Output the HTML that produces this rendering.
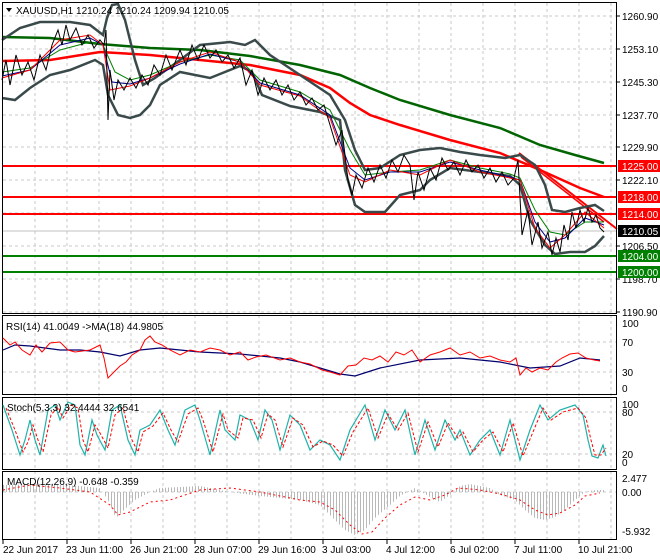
<!DOCTYPE html>
<html><head><meta charset="utf-8"><style>
html,body{margin:0;padding:0;background:#fff;width:660px;height:560px;overflow:hidden}
svg{display:block;font-family:"Liberation Sans",sans-serif;font-size:10px}
</style></head><body>
<svg width="660" height="560" viewBox="0 0 660 560" xmlns="http://www.w3.org/2000/svg">
<defs>
<pattern id="hb" width="3" height="10" patternUnits="userSpaceOnUse"><rect x="0" y="0" width="1" height="10" fill="#b8b8b8"/></pattern>
</defs>
<g stroke="#c8c8c8" stroke-dasharray="3,3" stroke-width="1">
<line x1="35" y1="3" x2="35" y2="540"/><line x1="67" y1="3" x2="67" y2="540"/><line x1="99" y1="3" x2="99" y2="540"/><line x1="131" y1="3" x2="131" y2="540"/><line x1="163" y1="3" x2="163" y2="540"/><line x1="195" y1="3" x2="195" y2="540"/><line x1="227" y1="3" x2="227" y2="540"/><line x1="259" y1="3" x2="259" y2="540"/><line x1="291" y1="3" x2="291" y2="540"/><line x1="323" y1="3" x2="323" y2="540"/><line x1="355" y1="3" x2="355" y2="540"/><line x1="387" y1="3" x2="387" y2="540"/><line x1="419" y1="3" x2="419" y2="540"/><line x1="451" y1="3" x2="451" y2="540"/><line x1="483" y1="3" x2="483" y2="540"/><line x1="515" y1="3" x2="515" y2="540"/><line x1="547" y1="3" x2="547" y2="540"/><line x1="579" y1="3" x2="579" y2="540"/><line x1="611" y1="3" x2="611" y2="540"/>
<line x1="3" y1="16" x2="617" y2="16"/><line x1="3" y1="49" x2="617" y2="49"/><line x1="3" y1="82" x2="617" y2="82"/><line x1="3" y1="115" x2="617" y2="115"/><line x1="3" y1="147" x2="617" y2="147"/><line x1="3" y1="180" x2="617" y2="180"/><line x1="3" y1="213" x2="617" y2="213"/><line x1="3" y1="246" x2="617" y2="246"/><line x1="3" y1="279" x2="617" y2="279"/><line x1="3" y1="312" x2="617" y2="312"/>
<line x1="3" y1="342" x2="617" y2="342"/><line x1="3" y1="372" x2="617" y2="372"/>
<line x1="3" y1="412" x2="617" y2="412"/><line x1="3" y1="454" x2="617" y2="454"/>
<line x1="3" y1="492" x2="617" y2="492"/>
</g>
<!-- horizontal levels -->
<g stroke-width="2">
<line x1="3" y1="166" x2="617" y2="166" stroke="#f00"/>
<line x1="3" y1="197" x2="617" y2="197" stroke="#f00"/>
<line x1="3" y1="214" x2="617" y2="214" stroke="#f00"/>
<line x1="3" y1="256" x2="617" y2="256" stroke="#008000"/>
<line x1="3" y1="272" x2="617" y2="272" stroke="#008000"/>
</g>
<line x1="3" y1="231" x2="617" y2="231" stroke="#c0c0c0"/>
<!-- MAs -->
<polyline fill="none" stroke="#006400" stroke-width="2.5" points="2,37 50,38 100,44 150,48 200,50 250,56 300,65 340,75 370,88 400,100 450,115 500,128 540,145 575,155 604,163"/>
<polyline fill="none" stroke="#f00" stroke-width="2.5" points="2,61 50,60 100,52 150,55 200,60 250,65 300,75 330,88 350,103 370,115 400,125 450,140 500,153 540,170 580,188 604,197"/>
<!-- trendlines -->
<line x1="519" y1="153" x2="617" y2="229" stroke="#f00" stroke-width="2"/>
<line x1="521" y1="157" x2="604" y2="222" stroke="#f00" stroke-width="1.5"/>
<!-- bollinger -->
<polyline fill="none" stroke="#3a4a4a" stroke-width="2.5" points="2,40 20,28 40,22 70,22 90,25 103,35 107,18 112,5 118,4 125,20 135,60 143,85 155,78 180,60 200,45 230,42 245,45 255,40 270,55 300,75 330,95 345,120 355,150 365,170 380,168 400,155 420,150 440,148 460,152 480,155 505,158 520,155 535,165 545,185 552,210 565,212 580,208 595,205 604,211"/>
<polyline fill="none" stroke="#3a4a4a" stroke-width="2.5" points="2,98 15,100 30,88 50,75 70,70 95,60 103,65 108,95 118,115 130,118 140,115 150,105 160,85 180,72 210,78 240,66 252,72 262,95 290,106 320,112 340,120 345,170 355,205 365,212 385,212 400,195 420,190 430,180 450,168 480,172 510,176 520,185 530,220 545,245 555,254 570,252 585,252 595,246 604,236"/>
<!-- small MAs -->
<polyline fill="none" stroke="#008000" stroke-width="1" points="2,72 30,68 60,50 90,42 103,45 115,72 130,80 150,75 180,62 210,55 240,60 260,80 300,92 330,110 350,150 365,175 390,172 420,170 450,160 480,168 510,174 520,178 535,210 550,232 565,235 585,222 604,222"/>
<polyline fill="none" stroke="#00008b" stroke-width="1" points="2,76 30,70 60,45 90,38 103,45 112,82 130,84 150,78 180,64 210,54 240,62 260,83 300,95 330,115 350,168 365,180 390,172 420,172 450,162 480,170 510,177 520,180 535,222 550,242 565,238 585,218 604,225"/>
<polyline fill="none" stroke="#f00" stroke-width="1" points="2,78 30,70 60,40 90,35 103,45 110,90 130,86 150,78 180,62 210,52 240,62 260,85 300,96 330,118 350,175 365,182 390,170 420,175 450,160 480,172 510,178 520,180 535,228 550,248 565,235 585,212 604,228"/>
<!-- price -->
<polyline fill="none" stroke="#000" stroke-width="1" points="2,80 6,60 10,85 16,55 22,75 28,62 34,80 40,55 46,70 52,45 58,30 62,45 66,25 70,40 76,28 82,45 88,35 94,48 100,40 104,45 106,30 108,120 110,70 114,100 118,80 124,90 130,78 136,88 142,75 148,85 154,65 160,75 166,55 172,70 180,50 186,65 192,45 198,60 204,45 210,58 216,50 222,62 228,55 234,68 240,58 246,85 252,70 258,95 264,78 270,90 276,80 282,95 288,85 294,100 300,92 306,105 312,98 318,110 324,105 330,125 336,145 342,130 348,180 352,195 356,175 362,188 368,168 374,182 380,165 386,178 392,160 398,172 404,155 410,165 414,200 418,172 424,190 430,168 436,180 442,158 448,170 454,162 460,175 466,160 472,172 478,165 484,178 490,168 496,182 502,172 508,185 514,178 518,160 522,235 528,210 532,245 538,222 542,248 548,232 552,255 556,238 560,252 564,225 568,240 572,212 576,228 580,210 584,222 588,208 592,222 596,215 600,228 604,232"/>
<!-- panel borders -->
<g fill="none" stroke="#000" stroke-width="1">
<rect x="2.5" y="2.5" width="614" height="311"/>
<rect x="2.5" y="315.5" width="614" height="79"/>
<rect x="2.5" y="397.5" width="614" height="72"/>
<rect x="2.5" y="471.5" width="614" height="68"/>
</g>
<!-- RSI -->
<polyline fill="none" stroke="#00006e" stroke-width="1.2" points="3,350 15,345 30,346 60,350 80,350 100,352 120,356 140,350 160,348 200,352 240,354 280,358 300,362 320,368 340,374 355,376 380,368 420,360 460,358 500,362 530,368 560,366 580,358 600,360"/>
<polyline fill="none" stroke="#f00" stroke-width="1" points="3,338 10,345 15,342 22,350 30,355 36,345 42,352 50,343 60,342 68,350 75,352 90,350 100,345 104,358 108,378 114,372 120,366 126,362 132,355 140,350 145,340 150,336 155,342 162,345 170,350 180,355 190,350 200,352 210,348 220,350 230,355 240,352 248,360 256,357 266,355 280,360 290,358 300,362 310,364 322,370 330,372 340,375 348,366 356,365 364,358 372,360 380,356 388,362 396,352 404,355 412,350 420,362 430,355 440,352 450,348 460,355 470,352 480,358 490,356 500,360 510,362 516,358 520,375 526,368 532,372 540,368 548,370 556,362 562,358 570,354 578,353 586,358 594,360 600,361"/>
<!-- Stoch -->
<polyline fill="none" stroke="#20b2aa" stroke-width="1.2" points="3,405 12,430 20,455 25,440 30,420 35,440 40,455 48,410 55,405 60,420 68,402 75,405 80,445 85,455 92,420 97,435 105,450 112,410 120,405 128,440 135,455 140,430 150,425 160,410 168,430 175,445 185,410 195,405 200,420 210,455 220,410 225,430 235,440 240,415 250,420 258,440 265,410 272,420 280,450 290,415 300,425 310,450 320,440 330,445 340,460 350,430 365,405 375,440 385,410 395,430 405,410 415,455 425,420 435,450 445,420 455,440 460,430 470,455 480,440 490,430 500,455 510,420 520,460 530,430 540,405 548,420 560,410 575,405 583,415 588,440 592,456 598,458 603,445 606,456"/>
<polyline fill="none" stroke="#f00" stroke-width="1" stroke-dasharray="3,2" points="6,408 15,430 23,452 28,442 33,425 38,440 43,452 51,415 58,407 63,418 71,405 78,408 83,440 88,452 95,425 100,433 108,448 115,415 123,408 131,438 138,452 143,432 153,426 163,413 171,430 178,442 188,414 198,408 203,420 213,452 223,414 228,430 238,438 243,418 253,420 261,438 268,414 275,420 283,447 293,418 303,425 313,447 323,441 333,445 343,456 353,432 368,408 378,438 388,414 398,430 408,413 418,452 428,422 438,447 448,423 458,438 463,432 473,452 483,440 493,432 503,452 513,423 523,456 533,432 543,408 551,420 563,412 578,408 586,418 591,440 595,455 601,455 606,448"/>
<!-- MACD histogram -->
<polygon fill="url(#hb)" points="3,492 3,485 40,484 80,486 100,488 108,500 116,518 124,510 135,500 150,492 160,488 200,486 230,492 260,496 300,500 320,505 335,520 345,530 355,535 365,530 375,518 390,505 400,496 415,488 430,497 440,502 450,495 460,486 470,484 490,488 500,495 515,500 525,510 535,518 545,520 555,517 565,510 575,500 585,492 595,490 604,490 604,492"/>
<polyline fill="none" stroke="#f00" stroke-width="1" stroke-dasharray="2,3" points="3,490 30,485 60,488 90,492 110,505 118,515 130,512 150,502 170,500 200,490 230,488 260,492 300,500 320,502 335,510 350,525 362,534 372,532 385,518 400,505 415,497 430,500 445,495 458,488 470,489 480,490 500,494 520,500 535,510 548,515 560,513 575,505 585,496 600,493"/>
<!-- header -->
<path d="M6,8 L12,8 L9,12 Z" fill="#000"/>
<text x="16" y="14" fill="#000">XAUUSD,H1  1210.24 1210.24 1209.94 1210.05</text>
<text x="6" y="330" fill="#000">RSI(14) 41.0049  -&gt;MA(18) 44.9805</text>
<text x="7" y="411" fill="#000">Stoch(5,3,3) 32.4444 32.6541</text>
<text x="7" y="485" fill="#000">MACD(12,26,9) -0.648 -0.359</text>
<!-- right axis -->
<g fill="#000">
<text x="622" y="20">1260.90</text><text x="622" y="53">1253.10</text><text x="622" y="86">1245.30</text><text x="622" y="119">1237.70</text><text x="622" y="151">1229.90</text><text x="622" y="184">1222.10</text><text x="622" y="250">1206.50</text><text x="622" y="283">1198.70</text><text x="622" y="316">1190.90</text>
<text x="622" y="327">100</text><text x="622" y="346">70</text><text x="622" y="376">30</text><text x="622" y="392">0</text>
<text x="622" y="408">100</text><text x="622" y="416">80</text><text x="622" y="458">20</text><text x="622" y="466">0</text>
<text x="622" y="482">2.477</text><text x="622" y="496">0.00</text><text x="622" y="535">-5.932</text>
</g>
<g stroke="#000"><line x1="617" y1="16" x2="620" y2="16"/><line x1="617" y1="49" x2="620" y2="49"/><line x1="617" y1="82" x2="620" y2="82"/><line x1="617" y1="115" x2="620" y2="115"/><line x1="617" y1="147" x2="620" y2="147"/><line x1="617" y1="180" x2="620" y2="180"/><line x1="617" y1="246" x2="620" y2="246"/><line x1="617" y1="279" x2="620" y2="279"/><line x1="617" y1="312" x2="620" y2="312"/></g>
<rect x="618" y="160" width="42" height="12" fill="#f00"/><text x="622" y="170" fill="#fff">1225.00</text>
<rect x="618" y="191" width="42" height="12" fill="#f00"/><text x="622" y="201" fill="#fff">1218.00</text>
<rect x="618" y="208" width="42" height="12" fill="#f00"/><text x="622" y="218" fill="#fff">1214.00</text>
<rect x="618" y="225" width="42" height="12" fill="#000"/><text x="622" y="235" fill="#fff">1210.05</text>
<rect x="618" y="250" width="42" height="12" fill="#008000"/><text x="622" y="260" fill="#fff">1204.00</text>
<rect x="618" y="266" width="42" height="12" fill="#008000"/><text x="622" y="276" fill="#fff">1200.00</text>
<!-- dates -->
<g stroke="#000"><line x1="3" y1="540" x2="3" y2="544"/><line x1="67" y1="540" x2="67" y2="544"/><line x1="131" y1="540" x2="131" y2="544"/><line x1="195" y1="540" x2="195" y2="544"/><line x1="259" y1="540" x2="259" y2="544"/><line x1="323" y1="540" x2="323" y2="544"/><line x1="387" y1="540" x2="387" y2="544"/><line x1="451" y1="540" x2="451" y2="544"/><line x1="515" y1="540" x2="515" y2="544"/><line x1="579" y1="540" x2="579" y2="544"/></g>
<g fill="#000">
<text x="3" y="553">22 Jun 2017</text><text x="66" y="553">23 Jun 11:00</text><text x="130" y="553">26 Jun 21:00</text><text x="194" y="553">28 Jun 07:00</text><text x="258" y="553">29 Jun 16:00</text><text x="322" y="553">3 Jul 03:00</text><text x="386" y="553">4 Jul 12:00</text><text x="450" y="553">6 Jul 02:00</text><text x="514" y="553">7 Jul 11:00</text><text x="578" y="553">10 Jul 21:00</text>
</g>
</svg>
</body></html>
